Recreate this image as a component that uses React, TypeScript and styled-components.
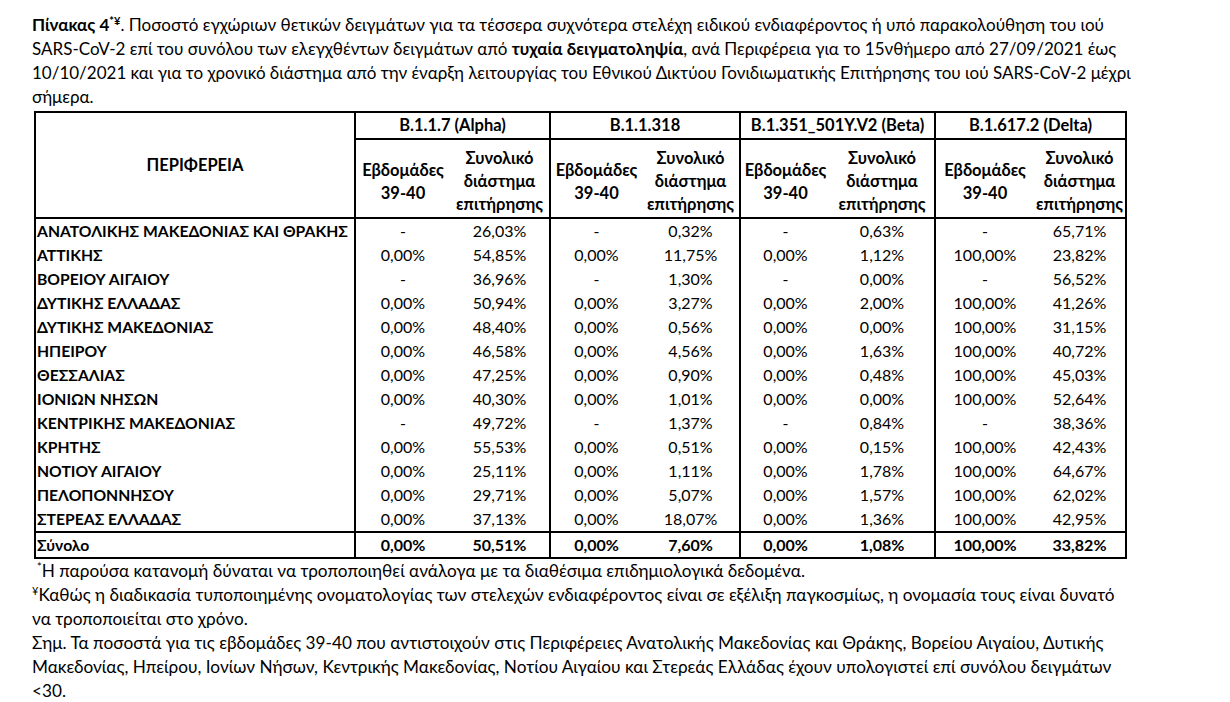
import React from "react";
import styled, { createGlobalStyle } from "styled-components";

const Global = createGlobalStyle`
  html, body { margin: 0; padding: 0; background: #fff; }
  body { font-family: Lato, "Open Sans", "Noto Sans", sans-serif; color: #000; }
`;

const Page = styled.div`
  width: 1230px;
  box-sizing: border-box;
  padding: 13px 0 0 32px;
`;

const Caption = styled.p`
  margin: 0 0 2px;
  font-size: 17px;
  line-height: 24px;
  white-space: nowrap;
`;

const Sup = styled.sup`
  font-size: 11px;
  line-height: 0;
  vertical-align: 6px;
`;

const Table = styled.table`
  margin-left: 2px;
  width: 1091px;
  table-layout: fixed;
  border-collapse: collapse;
  border: 2px solid #000;
  font-size: 16px;
`;

const HeadCell = styled.th<{ $edge?: boolean; $line?: boolean; $tall?: boolean }>`
  padding: ${(p) => (p.$tall ? "6px 0 0" : "0")};
  height: ${(p) => (p.$tall ? "71px" : "25px")};
  font-size: 16.5px;
  font-weight: 700;
  line-height: 23px;
  text-align: center;
  vertical-align: middle;
  white-space: nowrap;
  border-left: ${(p) => (p.$edge ? "2px solid #000" : "none")};
  border-bottom: ${(p) => (p.$line ? "2px solid #000" : "none")};
`;

const Row = styled.tr<{ $total?: boolean }>`
  height: 24px;
  font-weight: ${(p) => (p.$total ? 700 : 400)};
  border-top: ${(p) => (p.$total ? "2px solid #000" : "none")};
`;

const Name = styled.td`
  padding: 0 0 0 1px;
  font-size: 15.7px;
  font-weight: 700;
  text-align: left;
  white-space: nowrap;
  line-height: 24px;
`;

const Val = styled.td<{ $edge?: boolean }>`
  padding: 0;
  text-align: center;
  line-height: 24px;
  white-space: nowrap;
  border-left: ${(p) => (p.$edge ? "2px solid #000" : "none")};
`;

const Notes = styled.div`
  font-size: 17.2px;
  line-height: 24px;
  white-space: nowrap;
`;

const NoteLine = styled.div<{ $indent?: boolean }>`
  padding-left: ${(p) => (p.$indent ? "5px" : "0")};
`;

const groups = ["B.1.1.7 (Alpha)", "B.1.1.318", "B.1.351_501Y.V2 (Beta)", "B.1.617.2 (Delta)"];
const widths = [320, 95, 100, 92, 98, 90, 105, 99, 92];

const rows: [string, string[]][] = [
  ["ΑΝΑΤΟΛΙΚΗΣ ΜΑΚΕΔΟΝΙΑΣ ΚΑΙ ΘΡΑΚΗΣ", ["-", "26,03%", "-", "0,32%", "-", "0,63%", "-", "65,71%"]],
  ["ΑΤΤΙΚΗΣ", ["0,00%", "54,85%", "0,00%", "11,75%", "0,00%", "1,12%", "100,00%", "23,82%"]],
  ["ΒΟΡΕΙΟΥ ΑΙΓΑΙΟΥ", ["-", "36,96%", "-", "1,30%", "-", "0,00%", "-", "56,52%"]],
  ["ΔΥΤΙΚΗΣ ΕΛΛΑΔΑΣ", ["0,00%", "50,94%", "0,00%", "3,27%", "0,00%", "2,00%", "100,00%", "41,26%"]],
  ["ΔΥΤΙΚΗΣ ΜΑΚΕΔΟΝΙΑΣ", ["0,00%", "48,40%", "0,00%", "0,56%", "0,00%", "0,00%", "100,00%", "31,15%"]],
  ["ΗΠΕΙΡΟΥ", ["0,00%", "46,58%", "0,00%", "4,56%", "0,00%", "1,63%", "100,00%", "40,72%"]],
  ["ΘΕΣΣΑΛΙΑΣ", ["0,00%", "47,25%", "0,00%", "0,90%", "0,00%", "0,48%", "100,00%", "45,03%"]],
  ["ΙΟΝΙΩΝ ΝΗΣΩΝ", ["0,00%", "40,30%", "0,00%", "1,01%", "0,00%", "0,00%", "100,00%", "52,64%"]],
  ["ΚΕΝΤΡΙΚΗΣ ΜΑΚΕΔΟΝΙΑΣ", ["-", "49,72%", "-", "1,37%", "-", "0,84%", "-", "38,36%"]],
  ["ΚΡΗΤΗΣ", ["0,00%", "55,53%", "0,00%", "0,51%", "0,00%", "0,15%", "100,00%", "42,43%"]],
  ["ΝΟΤΙΟΥ ΑΙΓΑΙΟΥ", ["0,00%", "25,11%", "0,00%", "1,11%", "0,00%", "1,78%", "100,00%", "64,67%"]],
  ["ΠΕΛΟΠΟΝΝΗΣΟΥ", ["0,00%", "29,71%", "0,00%", "5,07%", "0,00%", "1,57%", "100,00%", "62,02%"]],
  ["ΣΤΕΡΕΑΣ ΕΛΛΑΔΑΣ", ["0,00%", "37,13%", "0,00%", "18,07%", "0,00%", "1,36%", "100,00%", "42,95%"]],
];
const total: string[] = ["0,00%", "50,51%", "0,00%", "7,60%", "0,00%", "1,08%", "100,00%", "33,82%"];

export default function App() {
  return (
    <>
      <Global />
      <Page>
        <Caption>
          <b>Πίνακας 4<Sup>*¥</Sup></b>. Ποσοστό εγχώριων θετικών δειγμάτων για τα τέσσερα συχνότερα στελέχη ειδικού ενδιαφέροντος ή υπό παρακολούθηση του ιού
          <br />
          SARS-CoV-2 επί του συνόλου των ελεγχθέντων δειγμάτων από <b>τυχαία δειγματοληψία</b>, ανά Περιφέρεια για το 15νθήμερο από 27/09/2021 έως
          <br />
          10/10/2021 και για το χρονικό διάστημα από την έναρξη λειτουργίας του Εθνικού Δικτύου Γονιδιωματικής Επιτήρησης του ιού SARS-CoV-2 μέχρι
          <br />
          σήμερα.
        </Caption>
        <Table>
          <colgroup>
            {widths.map((w, i) => (
              <col key={i} style={{ width: w }} />
            ))}
          </colgroup>
          <thead>
            <tr>
              <HeadCell rowSpan={2} $line>ΠΕΡΙΦΕΡΕΙΑ</HeadCell>
              {groups.map((g) => (
                <HeadCell key={g} colSpan={2} $edge $line>
                  {g}
                </HeadCell>
              ))}
            </tr>
            <tr>
              {groups.map((g) => (
                <React.Fragment key={g}>
                  <HeadCell $edge $line $tall>
                    Εβδομάδες
                    <br />
                    39-40
                  </HeadCell>
                  <HeadCell $line $tall>
                    Συνολικό
                    <br />
                    διάστημα
                    <br />
                    επιτήρησης
                  </HeadCell>
                </React.Fragment>
              ))}
            </tr>
          </thead>
          <tbody>
            {rows.map(([name, vals]) => (
              <Row key={name}>
                <Name>{name}</Name>
                {vals.map((v, i) => (
                  <Val key={i} $edge={i % 2 === 0}>
                    {v}
                  </Val>
                ))}
              </Row>
            ))}
            <Row $total>
              <Name>Σύνολο</Name>
              {total.map((v, i) => (
                <Val key={i} $edge={i % 2 === 0}>
                  {v}
                </Val>
              ))}
            </Row>
          </tbody>
        </Table>
        <Notes>
          <NoteLine $indent>
            <Sup>*</Sup>Η παρούσα κατανομή δύναται να τροποποιηθεί ανάλογα με τα διαθέσιμα επιδημιολογικά δεδομένα.
          </NoteLine>
          <NoteLine>
            <Sup>¥</Sup>Καθώς η διαδικασία τυποποιημένης ονοματολογίας των στελεχών ενδιαφέροντος είναι σε εξέλιξη παγκοσμίως, η ονομασία τους είναι δυνατό
          </NoteLine>
          <NoteLine>να τροποποιείται στο χρόνο.</NoteLine>
          <NoteLine>
            Σημ. Τα ποσοστά για τις εβδομάδες 39-40 που αντιστοιχούν στις Περιφέρειες Ανατολικής Μακεδονίας και Θράκης, Βορείου Αιγαίου, Δυτικής
          </NoteLine>
          <NoteLine>
            Μακεδονίας, Ηπείρου, Ιονίων Νήσων, Κεντρικής Μακεδονίας, Νοτίου Αιγαίου και Στερεάς Ελλάδας έχουν υπολογιστεί επί συνόλου δειγμάτων
          </NoteLine>
          <NoteLine>&lt;30.</NoteLine>
        </Notes>
      </Page>
    </>
  );
}
